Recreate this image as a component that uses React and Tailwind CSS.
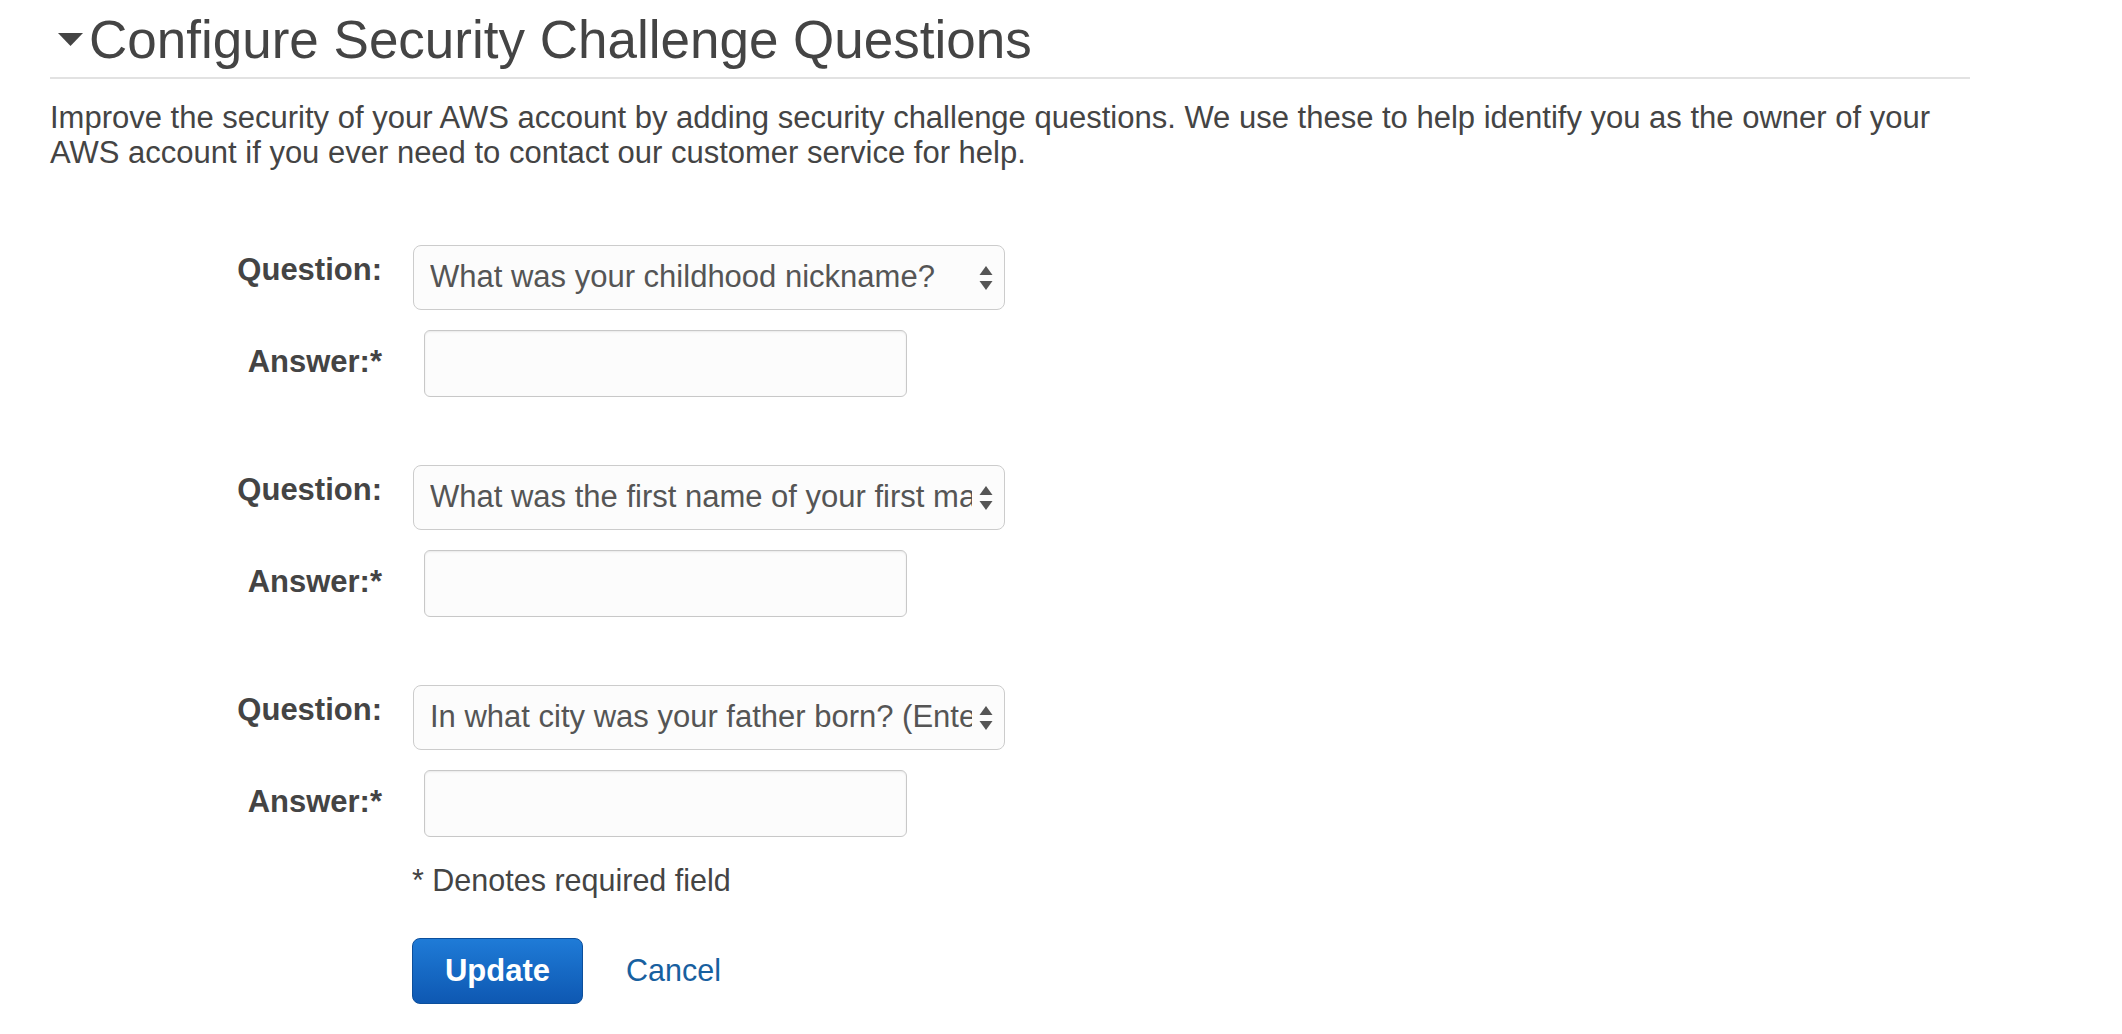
import React from 'react';

const questions = [
  'What was your childhood nickname?',
  'What was the first name of your first manager?',
  'In what city was your father born? (Enter full name of city only)',
];

const SelectArrows = () => (
  <svg className="pointer-events-none absolute right-[12px] top-1/2 -translate-y-1/2" width="14" height="26" viewBox="0 0 14 26">
    <path d="M7 1 L13.5 10 L0.5 10 Z" fill="#555" />
    <path d="M7 25 L13.5 16 L0.5 16 Z" fill="#555" />
  </svg>
);

const QuestionGroup = ({ question }) => (
  <div className="flex flex-col">
    <div className="flex items-start">
      <label className="w-[332px] pt-[10px] text-right text-[31px] font-bold leading-[30px]">Question:</label>
      <div className="relative ml-[31px]">
        <select
          defaultValue={question}
          className="h-[65px] w-[592px] appearance-none rounded-[8px] border border-[#cccccc] bg-[#fcfcfc] pl-[16px] pr-[32px] text-[31px] text-[#555] outline-none"
        >
          {questions.map((q) => (
            <option key={q} value={q}>{q}</option>
          ))}
        </select>
        <SelectArrows />
      </div>
    </div>
    <div className="mt-[20px] flex items-start">
      <label className="w-[332px] pt-[17px] text-right text-[31px] font-bold leading-[30px]">Answer:*</label>
      <input
        type="text"
        className="ml-[42px] h-[67px] w-[483px] rounded-[6px] border border-[#c8c8c8] bg-[#fcfcfc] px-[12px] text-[30px] shadow-[inset_0_1px_2px_rgba(0,0,0,0.08)] outline-none"
      />
    </div>
  </div>
);

export default function App() {
  return (
    <div className="min-h-screen bg-white font-['Liberation_Sans',Arial,sans-serif] text-[#444]">
      <div className="ml-[50px] w-[1920px] pt-[13px]">
        <h1 className="flex items-center border-b-2 border-[#e2e2e2] pb-[11px] text-[53px] font-normal leading-[53px]">
          <svg className="ml-[8px] mr-[6px]" width="25" height="13" viewBox="0 0 25 13">
            <path d="M0 0 L25 0 L12.5 13 Z" fill="#444" />
          </svg>
          Configure Security Challenge Questions
        </h1>

        <p className="mt-[21px] text-[31px] leading-[35px]">
          Improve the security of your AWS account by adding security challenge questions. We use these to help identify you as the owner of your AWS account if you ever need to contact our customer service for help.
        </p>

        <form className="mt-[75px]" onSubmit={(e) => e.preventDefault()}>
          <div className="flex flex-col gap-[68px]">
            {questions.map((q) => (
              <QuestionGroup key={q} question={q} />
            ))}
          </div>

          <p className="ml-[362px] mt-[26px] text-[30.5px] leading-[35px]">* Denotes required field</p>

          <div className="ml-[362px] mt-[40px] flex items-center gap-[43px]">
            <button
              type="submit"
              className="h-[66px] w-[171px] rounded-[8px] border border-[#0c4f9c] bg-gradient-to-b from-[#1f7bd7] to-[#0e58b2] text-[31px] font-bold text-white"
            >
              Update
            </button>
            <a href="#" className="text-[30.5px] text-[#17609f]">Cancel</a>
          </div>
        </form>
      </div>
    </div>
  );
}
